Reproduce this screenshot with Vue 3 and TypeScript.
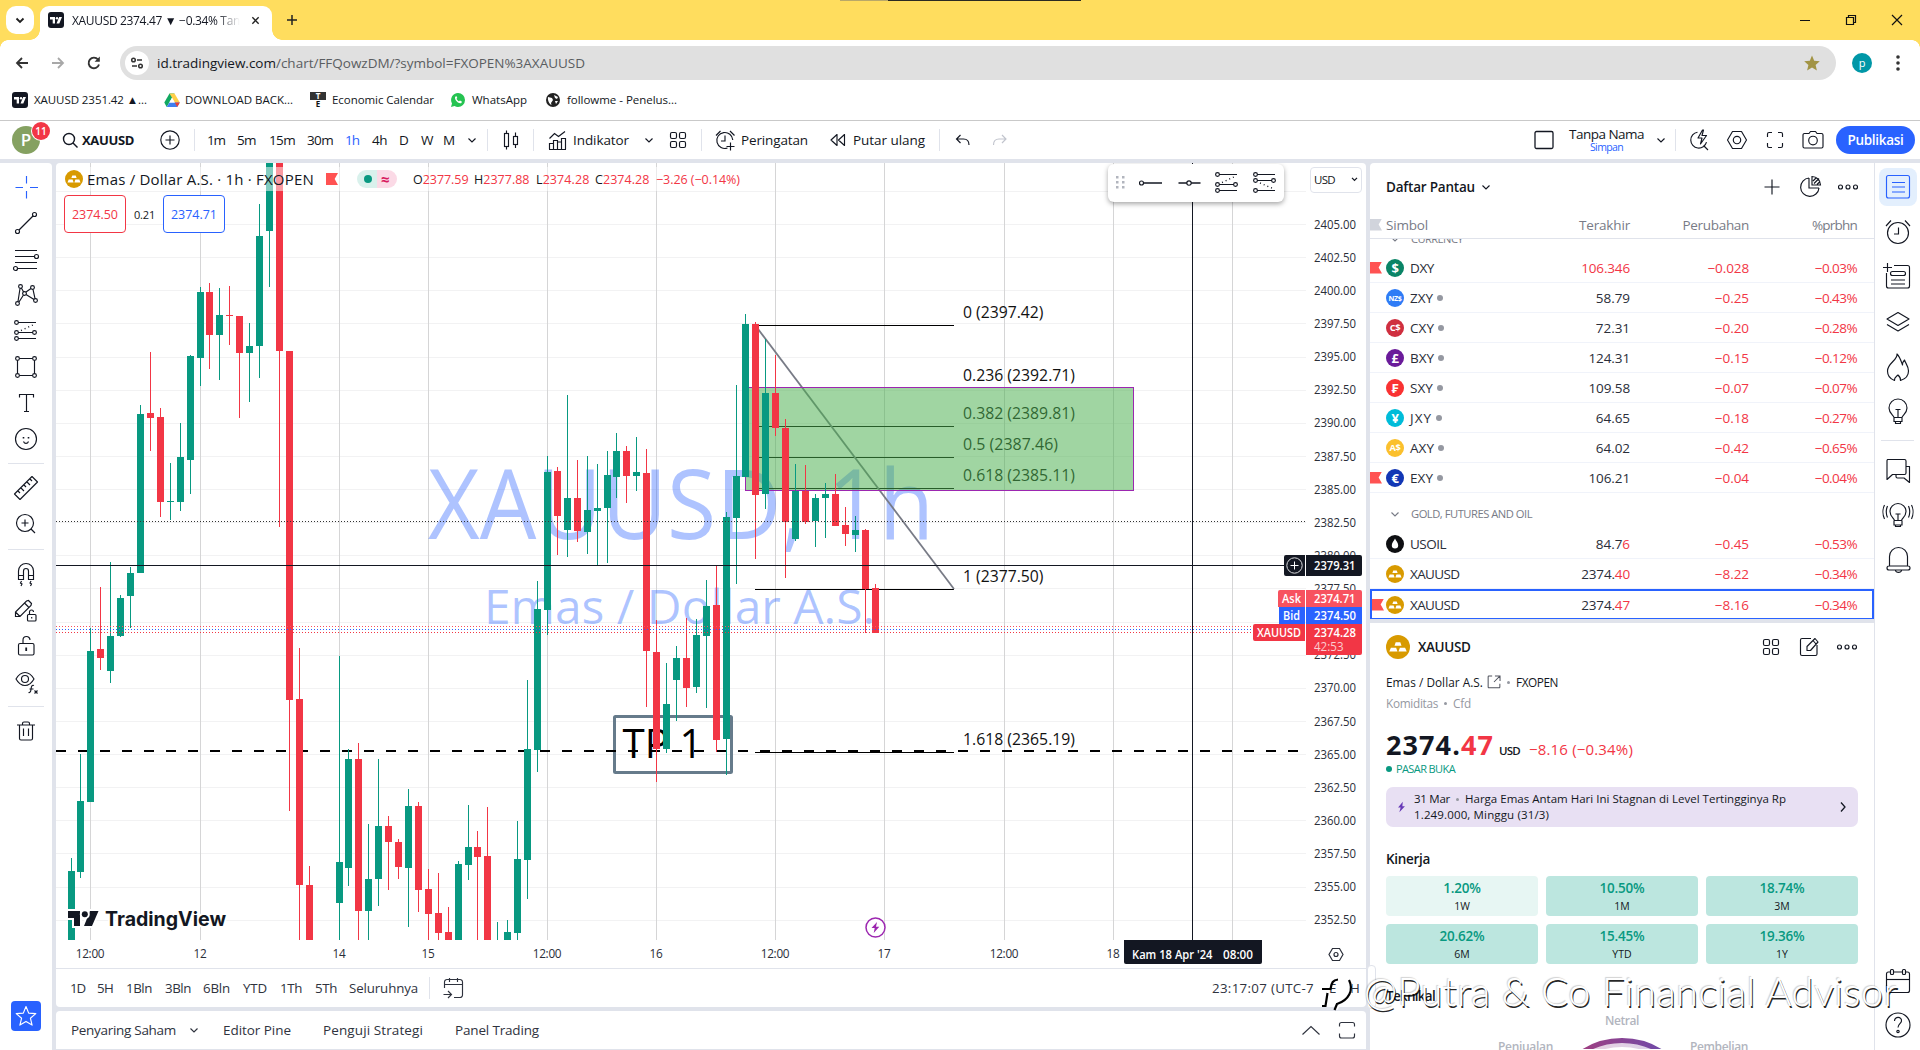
<script setup lang="ts">
type Candle = [number, number, number, number, number, 'g' | 'r']

/* Spaces the letters of an element so that its text takes the given width. */
const vFit = {
  mounted(el: HTMLElement, binding: { value: number }) {
    const range = document.createRange()
    range.selectNodeContents(el)
    const width = range.getBoundingClientRect().width
    const count = (el.textContent ?? '').length
    if (count > 0) el.style.letterSpacing = `${((binding.value - width) / count).toFixed(3)}px`
  },
}

const icons: Record<string, string> = {
  chevron: '<path d="M10.5 12.5l3.5 3.5 3.5-3.5"/>',
  up: '<path d="M5.5 18.5l8.5-8 8.5 8"/>',
  right: '<path d="M12 9.5l4 4.5-4 4.5" stroke-width="1.3"/>',
  search: '<circle cx="13" cy="13" r="5.5" stroke-width="1.4"/><path d="M17 17l4.5 4.5" stroke-width="1.4"/>',
  addc: '<circle cx="14" cy="14" r="9.2"/><path d="M14 9.5v9M9.5 14h9"/>',
  candles: '<path d="M9.5 4.5v3M9.5 20.5v3M18.5 6.500v4M18.5 18.500v3.500" /><rect x="7.500" y="7.500" width="4" height="13"/><rect x="16.500" y="10.500" width="4" height="8"/>',
  indicator: '<path d="M5.500 23v-5.500h4V23M9.500 23v-8.500h4V23M13.500 23v-7h4v7M17.500 23V12.500h4V23M5 23.500h17M5.500 12.500l5-5 4 3 6.500-5"/>',
  grid: '<rect x="6.500" y="6.500" width="6" height="6" rx="1.500"/><rect x="15.500" y="6.500" width="6" height="6" rx="1.500"/><rect x="6.500" y="15.500" width="6" height="6" rx="1.500"/><rect x="15.500" y="15.500" width="6" height="6" rx="1.500"/>',
  alarmadd: '<path d="M16.500 22a8 8 0 1 1 5.300-8M14 9.500V15h-4M5 9.500L9.500 5M23.500 9.500L19 5M19.500 16.500v8M15.500 20.500h8"/>',
  replay: '<path d="M13 8.500v11L7 14zM20.500 8.500v11l-6-5.500z" stroke-linejoin="round"/>',
  undo: '<path d="M11.500 9l-4 4 4 4M8 13h6.500c3.500 0 5.500 2 5.500 6"/>',
  redo: '<path d="M16 9l4 4-4 4M19.500 13H13c-3.500 0-5.500 2-5.500 6"/>',
  square: '<rect x="5" y="5.500" width="18" height="17" rx="1.500" stroke-width="1.300"/>',
  quick: '<path d="M12.500 6.200a8 8 0 1 0 9 10M18.500 19.500l4.500 4.500M17.500 4l-4.500 8h4l-1.500 6 6-8.500h-4.500l1.500-5.500z" stroke-linejoin="round"/>',
  hex: '<path d="M9.500 5.500h9l5 8.500-5 8.500h-9L4.500 14z" stroke-linejoin="round"/><circle cx="14" cy="14" r="3.700"/>',
  full: '<path d="M6.500 11V8A1.500 1.500 0 0 1 8 6.500h3M17 6.500h3A1.500 1.500 0 0 1 21.500 8v3M21.500 17v3a1.500 1.500 0 0 1-1.500 1.500h-3M11 21.500H8A1.500 1.500 0 0 1 6.500 20v-3"/>',
  maximize: '<path d="M6.500 10.500V8A2 2 0 0 1 8.500 6.500h11a2 2 0 0 1 2 2v2M21.500 17.500v2.500a2 2 0 0 1-2 2h-11a2 2 0 0 1-2-2v-2.500"/>',
  camera: '<path d="M10 7.500l1.500-2h5l1.500 2h4.500a1.500 1.500 0 0 1 1.500 1.500v11.500a1.500 1.500 0 0 1-1.500 1.500h-17A1.500 1.500 0 0 1 4 20.500V9a1.500 1.500 0 0 1 1.500-1.500z" stroke-linejoin="round"/><circle cx="14" cy="14.500" r="4.300"/>',
  cross: '<path d="M14.500 3v7.500M14.500 18v7.500M3.500 14.500H11M18 14.500h8"/>',
  trend: '<path d="M7 21L21 7"/><circle cx="5.500" cy="22.500" r="2"/><circle cx="22.500" cy="5.500" r="2"/>',
  fib: '<path d="M3 5.500h22M3 11.500h19.500M3 17.500h22M5.500 23.500H25"/><circle cx="24.500" cy="11.500" r="2"/><circle cx="3.500" cy="23.500" r="2"/>',
  xabcd: '<circle cx="5.500" cy="22.500" r="1.900"/><circle cx="8.500" cy="5.500" r="1.900"/><circle cx="12.500" cy="12.500" r="1.900"/><circle cx="20.500" cy="6.500" r="1.900"/><circle cx="23.500" cy="19.500" r="1.900"/><path d="M6 20.500L8 7.500M9.300 7l2.400 4M14 11l5-3.500M21 8.300l2 9.300M14 13.500l8 5M7 21l4.500-7"/>',
  forecast: '<path d="M6 5.500h18M6 15.500h15M6 21.500h18"/><circle cx="4.500" cy="5.500" r="1.900"/><circle cx="4.500" cy="15.500" r="1.900"/><circle cx="4.500" cy="21.500" r="1.900"/><circle cx="22.500" cy="15.500" r="1.900"/><path d="M9 13.500L23 7" stroke-dasharray="1 3" stroke-width="1.400"/>',
  forecast2: '<path d="M6 5.500h18M6 11.500h15M6 21.500h18"/><circle cx="4.500" cy="5.500" r="1.900"/><circle cx="4.500" cy="11.500" r="1.900"/><circle cx="4.500" cy="21.500" r="1.900"/><circle cx="22.500" cy="11.500" r="1.900"/><path d="M9 14L23 20" stroke-dasharray="1 3" stroke-width="1.400"/>',
  rect: '<path d="M7.500 5.500h13M7.500 22.500h13M5.500 7.500v13M22.500 7.500v13"/><circle cx="5.500" cy="5.500" r="1.900"/><circle cx="22.500" cy="5.500" r="1.900"/><circle cx="5.500" cy="22.500" r="1.900"/><circle cx="22.500" cy="22.500" r="1.900"/>',
  text: '<path d="M7.500 8.500v-3h14v3M14.500 5.500v17M12 22.500h5"/>',
  smile: '<circle cx="14" cy="14" r="10.500"/><path d="M11.500 16.500c1 2.500 4 2.500 5 0"/><path d="M11.500 12v1.500M16.500 12v1.500" stroke-width="1.600"/>',
  ruler: '<path d="M2.500 20L20 2.500l5.500 5.500L8 25.500zM6 17l2 2M9 14l3 3M12 11l2 2M15 8l3 3M18 5l2 2" stroke-linejoin="round"/>',
  zoom: '<circle cx="13" cy="13" r="8.500"/><path d="M19 19l4 4M13 9.500v7M9.500 13h7"/>',
  magnet: '<path d="M6.500 18.500V10a7.500 7.500 0 0 1 15 0v8.500h-5V10a2.500 2.500 0 0 0-5 0v8.500zM6.500 14.500h5M16.500 14.500h5M9.500 20l-1 2 1.500 1-1 2M19 20l-1 2 1.500 1-1 2"/>',
  pencil: '<path d="M3.500 19.500v-4.500L14.500 4l2-.5 3 3-.5 2L8 19.500zM12.500 6l4 4M3.500 15l4.500 4.500"/><rect x="15.500" y="17.500" width="8.500" height="6.500" rx="1"/><path d="M17.500 17.500v-2.500a2 2 0 0 1 4 0M19.700 20v1.500"/>',
  lock: '<rect x="6.500" y="10.500" width="15.500" height="11.500" rx="1.500"/><path d="M11 10.500V7a3.500 3.500 0 0 1 7 0"/><path d="M14.200 14.500v3.500" stroke-width="1.800"/>',
  eye: '<path d="M4 10c5-8.700 13-8.700 18 0-5 8.700-13 8.700-18 0z"/><circle cx="13" cy="10" r="3.500"/><path d="M22 16.500c-2-.8-2.600.5-2.900 3-.3 3-.8 4.500-2.600 4M17.500 20h4M22.500 21.500l3 3M25.500 21.500l-3 3"/>',
  trash: '<path d="M5 7h18M7.500 7V20.500A1.500 1.500 0 0 0 9 22h10a1.500 1.500 0 0 0 1.500-1.500V7M10.500 7V5.500A1.500 1.500 0 0 1 12 4h4A1.500 1.500 0 0 1 17.500 5.500v1.500M11.500 10.500v7.500M16.500 10.500v7.500"/>',
  star: '<path d="M14 4.500l2.700 6.600 7.100.5-5.400 4.600 1.700 6.900-6.100-3.700-6.100 3.700 1.700-6.900-5.400-4.600 7.100-.5z" stroke-linejoin="round"/>',
  plus: '<path d="M14 6.500v15M6.500 14h15"/>',
  pie: '<path d="M13 5a9.200 9.200 0 1 0 10 10M13 5v10h10M16 3.500v8.500h8.500a8.500 8.500 0 0 0-8.500-8.500zM17 8l3.500-3.500M18 10.500l5-5M21 11.500l3-3"/>',
  dots: '<circle cx="6.500" cy="14" r="2"/><circle cx="14" cy="14" r="2"/><circle cx="21.500" cy="14" r="2"/>',
  edit: '<path d="M16 5.500H7A1.500 1.500 0 0 0 5.500 7v14A1.500 1.500 0 0 0 7 22.500h13.500a1.500 1.500 0 0 0 1.500-1.500v-9M12 17.500v-4l8-8 3 3.500-7.500 8.500zM18 7.500l3 3.500" stroke-linejoin="round"/>',
  list: '<rect x="2.500" y="2.500" width="23" height="22.500" rx="2"/><path d="M8 9.500h13M8 14h13M8 19h13"/>',
  alarm: '<circle cx="14" cy="15" r="10.500"/><path d="M14.500 9.500V16H10M2 8l5-5.500M26 8l-5-5.500"/>',
  notes: '<path d="M10 2.500h13.500a2 2 0 0 1 2 2V23a2 2 0 0 1-2 2H4.500a2 2 0 0 1-2-2V10M3.500 0v9M-1 4.500h9M7 17h14M7 21h14"/><rect x="6.500" y="8.500" width="15" height="4" rx="2"/>',
  layers: '<path d="M14 4.500L25 11l-11 6.500L3 11zM3 16.500L14 23l11-6.500" stroke-linejoin="round"/>',
  fire: '<path d="M13 1c1 6-9.500 9-9.500 17 0 4.500 3 8 7 9.500-.5-3 1.500-3.500 3.500-5.500 1.500 1.500 3 3 2.500 5.500 5-1.500 8-5 8-9.500 0-5-3-7.500-4-11-1.500 1.500-2 3-2 5C17 8 16 4 13 1z" stroke-linejoin="round"/>',
  bulb: '<path d="M10 19.500c-.3-2-5-4-5-9.500a9 9 0 0 1 18 0c0 5.500-4.700 7.500-5 9.500zM10 19.500v4h8v-4M11.500 23.500v2h5v-2M11.500 11.500h5M14 11.500v8"/>',
  chat: '<path d="M3.500 3.500h17a1.500 1.500 0 0 1 1.500 1.500v12a1.500 1.500 0 0 1-1.500 1.500H8.500L3 23.500V4.500zM22 10.500h3.500v16l-5.500-4.500h-6.500A1.500 1.500 0 0 1 12 20.500v-2" stroke-linejoin="round"/>',
  stream: '<path d="M10.500 19.500c-.3-2-4.500-4-4.500-9a8 8 0 0 1 16 0c0 5-4.200 7-4.500 9zM10 19.500v4.500h8v-4.500M11.500 24v1.500h5V24M11.500 13h5M14 13v6.500M3.500 5c-1.500 3.500-1.500 8 0 11.500M.5 4c-2 4-2 10 0 14M24.500 5c1.500 3.500 1.500 8 0 11.500M27.500 4c2 4 2 10 0 14"/>',
  bell: '<path d="M5.500 20.500v-10a9 9 0 0 1 18 0v10M5 20h19a1.500 1.500 0 0 1 0 4H5a1.500 1.500 0 0 1 0-4zM11.500 24.500c.5 2.500 5.500 2.500 6 0"/>',
  calendar: '<rect x="2.500" y="6" width="23" height="20.500" rx="2"/><path d="M2.500 13.500h23"/><rect x="6.500" y="3.500" width="3" height="5" rx="1" fill="#fff"/><rect x="18.500" y="3.500" width="3" height="5" rx="1" fill="#fff"/>',
  help: '<circle cx="14" cy="14" r="12"/><path d="M10.500 10c0-5 7.500-4.500 7 0-.3 2.500-3.500 3-3.500 6.500"/><circle cx="14" cy="20.500" r="1.200"/>',
  goto: '<path d="M5.500 14V8A2.500 2.500 0 0 1 8 5.500h13A2.500 2.500 0 0 1 23.500 8v13a2.500 2.500 0 0 1-2.500 2.500h-6M5.500 10.500h18M10.500 4v4M18.500 4v4M4.500 20.500h7.500M9 17l3.500 3.500L9 24"/>',
  external: '<path d="M12 7.500H8.500a.8.800 0 0 0-.8.800v11.200a.8.800 0 0 0 .8.800h11a.8.800 0 0 0 .8-.8V16M15 7.500h5.500V13M20.500 7.500L14 14"/>',
  hray: '<path d="M5.500 14h19.500" stroke-width="1.500"/><circle cx="4.500" cy="14" r="2" fill="#fff"/>',
  hline: '<path d="M3.500 14h22" stroke-width="1.500"/><circle cx="14" cy="14" r="2.200" fill="#fff"/>',
}

const goldSvg = '<circle cx="12" cy="12" r="12" fill="#d89a00"/><path d="M9.700 7.200h4.600l1.200 3.600h-7zM4.900 12.700h5.200l1.400 3.800H3.300zM13.900 12.700h5.200l1.600 3.800h-8.200z" fill="#fff"/>'

const frames: [string, number, boolean?][] = [
  ['1m', 18], ['5m', 19], ['15m', 26], ['30m', 26], ['1h', 14, true], ['4h', 15], ['D', 8.5], ['W', 11], ['M', 10.5],
]
const tools = ['cross', 'trend', 'fib', 'xabcd', 'forecast', 'rect', 'text', 'smile', '-', 'ruler', 'zoom', '-', 'magnet', 'pencil', 'lock', 'eye', '-', 'trash']
const sideTools = ['list', 'alarm', 'notes', 'layers', 'fire', 'bulb', '-', 'chat', 'stream', 'bell']

/* x, high, body top, body bottom, low, colour */
const candles: Candle[] = [
  [71, 858, 871, 940, 940, 'g'], [80, 754, 801, 872, 878, 'g'], [90, 628, 651, 802, 802, 'g'], [100, 587, 649, 658, 670, 'r'],
  [110, 562, 636, 671, 683, 'g'], [120, 595, 598, 636, 637, 'g'], [130, 567, 573, 596, 628, 'g'], [140, 405, 414, 573, 573, 'g'],
  [150, 352, 413, 418, 451, 'r'], [160, 408, 417, 502, 517, 'r'], [170, 463, 501, 502, 520, 'g'], [180, 423, 457, 502, 511, 'g'],
  [190, 355, 356, 460, 494, 'g'], [200, 287, 292, 358, 386, 'g'], [209, 283, 292, 335, 369, 'r'], [219, 288, 315, 335, 380, 'g'],
  [229, 286, 315, 316, 345, 'r'], [239, 316, 316, 353, 418, 'r'], [249, 323, 346, 353, 402, 'g'], [259, 204, 236, 346, 378, 'g'],
  [269, 163, 163, 231, 287, 'g'], [279, 163, 163, 351, 527, 'r'], [289, 351, 351, 700, 811, 'r'], [299, 648, 699, 885, 940, 'r'],
  [309, 866, 885, 940, 940, 'r'], [339, 656, 862, 903, 940, 'g'], [348, 749, 759, 868, 886, 'g'], [358, 743, 759, 911, 940, 'r'],
  [368, 824, 879, 911, 940, 'g'], [378, 759, 826, 879, 906, 'g'], [388, 816, 826, 842, 890, 'r'], [398, 839, 842, 867, 879, 'r'],
  [408, 789, 806, 868, 927, 'g'], [418, 802, 806, 890, 912, 'r'], [428, 869, 889, 914, 940, 'r'], [438, 873, 913, 933, 940, 'r'],
  [448, 907, 932, 940, 940, 'r'], [458, 861, 864, 940, 940, 'g'], [468, 805, 847, 865, 880, 'g'], [477, 831, 847, 857, 940, 'r'],
  [487, 807, 856, 940, 940, 'r'], [497, 922, 940, 940, 940, 'g'], [507, 920, 932, 940, 940, 'g'], [517, 821, 859, 933, 940, 'g'],
  [527, 680, 749, 860, 899, 'g'], [537, 581, 609, 750, 772, 'g'], [547, 456, 472, 610, 635, 'g'], [557, 467, 471, 516, 555, 'r'],
  [567, 395, 498, 530, 557, 'g'], [577, 460, 498, 531, 542, 'r'], [587, 456, 510, 532, 554, 'g'], [597, 464, 508, 511, 565, 'g'],
  [607, 451, 475, 508, 563, 'g'], [616, 433, 451, 477, 498, 'g'], [626, 446, 451, 476, 503, 'r'], [636, 437, 472, 476, 491, 'g'],
  [646, 449, 473, 651, 707, 'r'], [656, 620, 652, 749, 782, 'r'], [666, 663, 704, 749, 753, 'g'], [676, 646, 658, 680, 721, 'g'],
  [686, 618, 658, 688, 707, 'r'], [696, 619, 635, 687, 693, 'g'], [706, 580, 606, 636, 708, 'g'], [716, 566, 605, 740, 752, 'r'],
  [726, 512, 517, 739, 775, 'g'], [736, 385, 476, 518, 584, 'g'], [745, 314, 324, 477, 477, 'g'], [755, 322, 324, 495, 559, 'r'],
  [765, 339, 393, 494, 509, 'g'], [775, 355, 393, 428, 436, 'r'], [785, 419, 428, 522, 578, 'r'], [795, 464, 491, 539, 541, 'g'],
  [805, 465, 491, 522, 524, 'r'], [815, 494, 498, 521, 547, 'g'], [825, 483, 494, 498, 538, 'g'], [835, 474, 494, 526, 526, 'r'],
  [845, 507, 525, 534, 546, 'r'], [855, 516, 530, 535, 552, 'g'], [865, 529, 530, 589, 633, 'r'], [875, 584, 588, 633, 633, 'r'],
]

const priceY = (p: number) => 224.6 + (2405 - p) * 13.25
const prices = Array.from({ length: 22 }, (_, i) => 2405 - i * 2.5)
const gridY = [2407.5, ...prices].map((p) => Math.floor(priceY(p)))
const times: [number, string][] = [
  [90, '12:00'], [200, '12'], [339, '14'], [428, '15'], [547, '12:00'], [656, '16'], [775, '12:00'], [884, '17'], [1004, '12:00'], [1113, '18'], [1232, ''],
]
const fibLines = [325, 426, 457, 488, 589, 752]
const fibLabels: [number, string, number][] = [
  [317.5, '0 (2397.42)', 80.5], [380.5, '0.236 (2392.71)', 112], [418.5, '0.382 (2389.81)', 112], [449.5, '0.5 (2387.46)', 95], [480.5, '0.618 (2385.11)', 112], [581.5, '1 (2377.50)', 80.5], [744.5, '1.618 (2365.19)', 112],
]

interface Row { sym: string; w: number; logo: string; bg: string; last: string; tail?: string; chg: string; pct: string; red?: boolean; dot?: boolean; flag?: boolean; sel?: boolean }
const currencies: Row[] = [
  { sym: 'DXY', w: 24, logo: '$', bg: '#0a8466', last: '106.346', chg: '−0.028', pct: '−0.03%', red: true, flag: true },
  { sym: 'ZXY', w: 23, logo: 'NZ$', bg: '#2f7cf6', last: '58.79', chg: '−0.25', pct: '−0.43%', dot: true },
  { sym: 'CXY', w: 24, logo: 'C$', bg: '#cf2f3f', last: '72.31', chg: '−0.20', pct: '−0.28%', dot: true },
  { sym: 'BXY', w: 24, logo: '£', bg: '#6a1b9a', last: '124.31', chg: '−0.15', pct: '−0.12%', dot: true },
  { sym: 'SXY', w: 23, logo: '₣', bg: '#f93232', last: '109.58', chg: '−0.07', pct: '−0.07%', dot: true },
  { sym: 'JXY', w: 22, logo: '¥', bg: '#00bcd9', last: '64.65', chg: '−0.18', pct: '−0.27%', dot: true },
  { sym: 'AXY', w: 24, logo: 'A$', bg: '#fbc02d', last: '64.02', chg: '−0.42', pct: '−0.65%', dot: true },
  { sym: 'EXY', w: 23, logo: '€', bg: '#1237b5', last: '106.21', chg: '−0.04', pct: '−0.04%', dot: true, flag: true },
]
const metals: Row[] = [
  { sym: 'USOIL', w: 36, logo: 'oil', bg: '#111', last: '84.7', tail: '6', chg: '−0.45', pct: '−0.53%' },
  { sym: 'XAUUSD', w: 49.5, logo: 'gold', bg: '', last: '2374.', tail: '40', chg: '−8.22', pct: '−0.34%' },
  { sym: 'XAUUSD', w: 49.5, logo: 'gold', bg: '', last: '2374.', tail: '47', chg: '−8.16', pct: '−0.34%', flag: true, sel: true },
]
const groups = [
  { name: 'CURRENCY', w: 52, rows: currencies },
  { name: 'GOLD, FUTURES AND OIL', w: 121, rows: metals },
]
/* Advance widths of the numeric columns at the list's text size. */
const numW = (s: string) => [...s].reduce((n, c) => n + (c === '.' ? 5 : c === '%' ? 8 : 7.3), 0)
const coinText = (s: string) => [{ y: 13.5, size: 13 }, { y: 12.3, size: 9.3 }, { y: 11.6, size: 7.2 }][s.length - 1]

const perf: [string, string][] = [['1.20%', '1W'], ['10.50%', '1M'], ['18.74%', '3M'], ['20.62%', '6M'], ['15.45%', 'YTD'], ['19.36%', '1Y']]
const ranges: [string, number][] = [['1D', 15], ['5H', 16], ['1Bln', 26], ['3Bln', 26], ['6Bln', 27], ['YTD', 24], ['1Th', 22], ['5Th', 22], ['Seluruhnya', 69]]
const ohlc: [string, string, number][] = [['O', '2377.59', 55.5], ['H', '2377.88', 55.5], ['L', '2374.28', 53.5], ['C', '2374.28', 54.5]]
</script>

<template>
  <div class="screen">
    <header class="tabs">
      <span class="streak"></span>
      <div class="tabmenu"><svg viewBox="0 0 10 10" width="10" height="10"><path d="M1.5 3.5L5 7l3.500-3.500" fill="none" stroke="#1f1f1f" stroke-width="1.800" /></svg></div>
      <div class="tab">
        <svg class="tvfav" viewBox="0 0 16 16"><rect width="16" height="16" rx="3" fill="#131722" /><path d="M2 5h5v6.500H4.700V7.500H2zM11.200 5H14l-2.700 6.500H8.500z" fill="#fff" /><circle cx="9" cy="6.200" r="1.200" fill="#fff" /></svg>
        <span class="tabtitle"><span v-fit="168" class="nw">XAUUSD 2374.47 ▼ −0.34% Tan</span></span>
        <svg class="tabx" viewBox="0 0 10 10"><path d="M1.500 1.500l7 7M8.500 1.500l-7 7" stroke="#222" stroke-width="1.500" /></svg>
      </div>
      <svg class="newtab" viewBox="0 0 12 12"><path d="M6 1v10M1 6h10" stroke="#222" stroke-width="1.500" /></svg>
      <div class="winctl">
        <svg viewBox="0 0 12 12"><path d="M1 6.500h10" stroke="#111" /></svg>
        <svg viewBox="0 0 12 12"><path d="M1.500 3.500h7v7h-7zM3.500 3.500v-2h7v7h-2" stroke="#111" fill="none" stroke-width="1.200" /></svg>
        <svg viewBox="0 0 12 12"><path d="M1 1l10 10M11 1L1 11" stroke="#111" stroke-width="1.200" /></svg>
      </div>
    </header>

    <div class="nav">
      <svg class="n16" viewBox="0 0 16 16"><path d="M14 8H3M8 3L3 8l5 5" fill="none" stroke="#333" stroke-width="1.800" /></svg>
      <svg class="n16" viewBox="0 0 16 16"><path d="M2 8h11M8 3l5 5-5 5" fill="none" stroke="#a8a8a8" stroke-width="1.800" /></svg>
      <svg class="n16" viewBox="0 0 16 16"><path d="M13 9.500a5.300 5.300 0 1 1-1-5" fill="none" stroke="#333" stroke-width="1.900" /><path d="M13.800 1.500v5.200H8.600z" fill="#333" /></svg>
      <div class="omni">
        <span class="tune"><svg viewBox="0 0 14 14" width="14" height="14"><g fill="none" stroke="#333" stroke-width="1.500"><circle cx="3.500" cy="4" r="1.800" /><path d="M7 4h5M2 10h5" /><circle cx="10.500" cy="10" r="1.800" /></g></svg></span>
        <span v-fit="428" class="url nw">id.tradingview.com<i>/chart/FFQowzDM/?symbol=FXOPEN%3AXAUUSD</i></span>
        <svg class="fav" viewBox="0 0 16 16"><path d="M8 .500l2.200 5.200 5.600.5-4.200 3.700 1.300 5.500L8 12.500l-4.900 2.900 1.300-5.500L.2 6.200l5.600-.5z" fill="#a29444" /></svg>
      </div>
      <span class="prof">p</span>
      <svg class="kebab" viewBox="0 0 4 16"><circle cx="2" cy="2" r="1.800" /><circle cx="2" cy="8" r="1.800" /><circle cx="2" cy="14" r="1.800" /></svg>
    </div>

    <div class="marks">
      <svg class="tvfav" viewBox="0 0 16 16"><rect width="16" height="16" rx="3" fill="#131722" /><path d="M2 5h5v6.500H4.700V7.500H2zM11.200 5H14l-2.700 6.500H8.500z" fill="#fff" /><circle cx="9" cy="6.200" r="1.200" fill="#fff" /></svg>
      <span><b v-fit="113">XAUUSD 2351.42 ▲...</b></span>
      <svg class="n16" viewBox="0 0 16 16"><path d="M5.500 1.500h5L5.300 10.600 2.700 15 .3 10.500z" fill="#11a861" /><path d="M5.500 1.500h5l5.300 9h-5z" fill="#ffcf48" /><path d="M5.400 10.500h10.400L13.200 15H2.700z" fill="#3f7ff0" /><path d="M15.800 10.500L13.200 15l-2.400-4.500z" fill="#e94235" /><path d="M8 5.800l2.700 4.700H5.300z" fill="#fff" /></svg>
      <span><b v-fit="108">DOWNLOAD BACK...</b></span>
      <span class="te"><u>T</u><em>E</em></span>
      <span><b v-fit="102">Economic Calendar</b></span>
      <svg class="n16" viewBox="0 0 16 16"><path d="M8 1a7 7 0 0 1 0 14c-1.300 0-2.400-.3-3.400-.9L1 15l1-3.500A7 7 0 0 1 8 1z" fill="#25c351" /><path d="M5.500 4.500c-2 2 2.500 8 6 6.500l.3-1.500-1.800-1-1 .8C8 9 7 8 6.500 6.800l.8-.9-.7-1.600z" fill="#fff" /></svg>
      <span><b v-fit="55">WhatsApp</b></span>
      <svg class="n16" viewBox="0 0 16 16"><circle cx="8" cy="8" r="7" fill="#222" /><path d="M3 5l4 1 1 2-2 3 .5 2C4 12 2.500 8 3 5zM9 3l4 2-1 2-2-1zM10 9l3 0-2 3z" fill="#fff" /></svg>
      <span><b v-fit="110">followme - Penelus...</b></span>
    </div>

    <div class="topbar">
      <span class="me">P<i>11</i></span>
      <svg class="ic" viewBox="0 0 28 28" v-html="icons.search"></svg>
      <b v-fit="52" class="nw tk">XAUUSD</b>
      <svg class="ic" viewBox="0 0 28 28" v-html="icons.addc"></svg>
      <span class="sep"></span>
      <span v-for="f in frames" :key="f[0]" v-fit="f[1]" class="nw" :class="{ on: f[2] }">{{ f[0] }}</span>
      <svg class="ic" viewBox="0 0 28 28" v-html="icons.chevron"></svg>
      <span class="sep"></span>
      <svg class="ic" viewBox="0 0 28 28" v-html="icons.candles"></svg>
      <span class="sep"></span>
      <svg class="ic" viewBox="0 0 28 28" v-html="icons.indicator"></svg>
      <span v-fit="56" class="nw">Indikator</span>
      <svg class="ic" viewBox="0 0 28 28" v-html="icons.chevron"></svg>
      <svg class="ic" viewBox="0 0 28 28" v-html="icons.grid"></svg>
      <span class="sep"></span>
      <svg class="ic" viewBox="0 0 28 28" v-html="icons.alarmadd"></svg>
      <span v-fit="67" class="nw">Peringatan</span>
      <svg class="ic" viewBox="0 0 28 28" v-html="icons.replay"></svg>
      <span v-fit="72" class="nw">Putar ulang</span>
      <span class="sep"></span>
      <svg class="ic" viewBox="0 0 28 28" v-html="icons.undo"></svg>
      <svg class="ic faint" viewBox="0 0 28 28" v-html="icons.redo"></svg>
      <svg class="ic" viewBox="0 0 28 28" v-html="icons.square"></svg>
      <span class="layout"><span v-fit="75" class="nw">Tanpa Nama</span><i v-fit="33" class="nw">Simpan</i></span>
      <svg class="ic" viewBox="0 0 28 28" v-html="icons.chevron"></svg>
      <span class="sep"></span>
      <svg class="ic" viewBox="0 0 28 28" v-html="icons.quick"></svg>
      <svg class="ic" viewBox="0 0 28 28" v-html="icons.hex"></svg>
      <svg class="ic" viewBox="0 0 28 28" v-html="icons.full"></svg>
      <svg class="ic" viewBox="0 0 28 28" v-html="icons.camera"></svg>
      <span class="publish"><span v-fit="56" class="nw">Publikasi</span></span>
    </div>

    <div class="work">
      <aside class="tools">
        <template v-for="(t, i) in tools" :key="i">
          <hr v-if="t === '-'" />
          <svg v-else class="ic" :class="{ blue: t === 'cross' }" viewBox="0 0 28 28" v-html="icons[t]"></svg>
        </template>
        <span class="starbtn"><svg class="ic" viewBox="0 0 28 28" v-html="icons.star"></svg></span>
      </aside>

      <main class="center">
        <section class="chart">
          <svg class="plot" viewBox="56 163 1310 805" width="1310" height="805">
            <g shape-rendering="crispEdges">
              <rect v-for="y in gridY" :key="'h' + y" x="56" :y="y" width="1250" height="1" fill="#f2f2f3" />
              <rect v-for="t in times" :key="'v' + t[0]" :x="t[0]" y="163" width="1" height="777" fill="#d5d5d6" />
            </g>
            <g fill="#2962ff" fill-opacity=".38" font-weight="500">
              <text x="428" y="539" font-size="97" textLength="506" lengthAdjust="spacingAndGlyphs">XAUUSD, 1h</text>
              <text x="484" y="624" font-size="48" textLength="391" lengthAdjust="spacingAndGlyphs">Emas / Dollar A.S.</text>
            </g>
            <rect v-for="y in fibLines" :key="'f' + y" x="755" :y="y" width="199" height="1" fill="#000" />
            <path d="M755 325L954 589" stroke="#787b86" stroke-width="1.800" />
            <text v-for="f in fibLabels" :key="f[1]" x="963" :y="f[0]" :textLength="f[2]" font-size="15.500" fill="#111" lengthAdjust="spacingAndGlyphs">{{ f[1] }}</text>
            <rect x="745.500" y="387.500" width="388" height="103" fill="#4caf50" fill-opacity=".53" stroke="#9c27b0" />
            <rect x="614.500" y="716.500" width="117" height="56" rx="1" fill="none" stroke="#667b8b" stroke-width="3" />
            <text x="622.500" y="758" font-size="40" textLength="80" fill="#000" lengthAdjust="spacingAndGlyphs">TP 1</text>
            <path d="M56 751H1306" stroke="#000" stroke-width="2" stroke-dasharray="10 12" />
            <g shape-rendering="crispEdges">
              <template v-for="c in candles" :key="c[0]">
                <rect :x="c[0]" :y="c[1]" width="1" :height="c[4] - c[1]" :fill="c[5] === 'g' ? '#089981' : '#f23645'" />
                <rect :x="c[0] - 3" :y="c[2]" width="7" :height="c[3] - c[2]" :fill="c[5] === 'g' ? '#089981' : '#f23645'" />
              </template>
              <path d="M56 521.500H1306" stroke="#333" stroke-dasharray="1 2" />
              <path d="M56 626.500H1278" stroke="#f7525f" stroke-dasharray="1 2" />
              <path d="M56 629.500H1279" stroke="#2962ff" stroke-dasharray="1 2" />
              <path d="M56 632.500H1253" stroke="#f23645" stroke-dasharray="1 2" />
              <path d="M56 565.500H1284M1192.500 163V940" stroke="#131722" />
            </g>
            <circle cx="875.500" cy="927.500" r="9.500" fill="#fff" stroke="#9c27b0" stroke-width="1.500" />
            <path d="M877 922l-5.500 6h3.200l-1 5 5.600-6.300h-3.300z" fill="#9c27b0" />

            <g class="logo">
              <path d="M68 911h12v15h-6v-8h-6zM90 911h8.500l-6.500 15h-8z" /><circle cx="84.800" cy="914.200" r="3" />
              <text x="105" y="926" textLength="121" lengthAdjust="spacingAndGlyphs">TradingView</text>
            </g>

            <g font-size="11.800" fill="#2a2e39">
              <text v-for="p in prices" :key="p" x="1314" :y="priceY(p) + 4.100" textLength="42" lengthAdjust="spacingAndGlyphs">{{ p.toFixed(2) }}</text>
              <text v-for="t in times" :key="'t' + t[0]" :x="t[0]" y="958.200" text-anchor="middle" letter-spacing="-.3">{{ t[1] }}</text>
            </g>

            <g font-size="12" font-weight="600" fill="#fff">
              <path d="M1286 555h19v21h-19a2 2 0 0 1-2-2v-17a2 2 0 0 1 2-2zM1306 555h54a2 2 0 0 1 2 2v17a2 2 0 0 1-2 2h-54z" fill="#131722" />
              <circle cx="1294.500" cy="565.500" r="7.700" fill="none" stroke="#d8d9dc" /><path d="M1294.500 561.500v8M1290.500 565.500h8" stroke="#fff" />
              <text x="1314" y="570" textLength="41.500" lengthAdjust="spacingAndGlyphs">2379.31</text>
              <path d="M1280 590h25v17h-27v-15a2 2 0 0 1 2-2zM1306 590h54a2 2 0 0 1 2 2v15h-56z" fill="#f7525f" />
              <text x="1282" y="603" textLength="19" lengthAdjust="spacingAndGlyphs">Ask</text>
              <text x="1314" y="603" textLength="41.500" lengthAdjust="spacingAndGlyphs">2374.71</text>
              <path d="M1279 607h26v17h-26zM1306 607h56v17h-56z" fill="#2962ff" />
              <text x="1283" y="620" textLength="17" lengthAdjust="spacingAndGlyphs">Bid</text>
              <text x="1314" y="620" textLength="42" lengthAdjust="spacingAndGlyphs">2374.50</text>
              <path d="M1255 624h50v17h-50a2 2 0 0 1-2-2v-13a2 2 0 0 1 2-2zM1306 624h56v29a2 2 0 0 1-2 2h-54z" fill="#f23645" />
              <text x="1257" y="637" textLength="44" lengthAdjust="spacingAndGlyphs">XAUUSD</text>
              <text x="1314" y="637" textLength="42" lengthAdjust="spacingAndGlyphs">2374.28</text>
              <text x="1314" y="651" textLength="29.500" lengthAdjust="spacingAndGlyphs" fill-opacity=".75" font-weight="500">42:53</text>
              <path d="M1124 940h138v22a2 2 0 0 1-2 2h-134a2 2 0 0 1-2-2z" fill="#131722" />
              <text x="1132" y="959" textLength="80.500" lengthAdjust="spacingAndGlyphs">Kam 18 Apr '24</text>
              <text x="1223" y="959" textLength="30" lengthAdjust="spacingAndGlyphs">08:00</text>
            </g>
            <g fill="none" stroke="#2a2e39" stroke-width="1.200"><path d="M1332.500 948.500h7l3.500 6-3.500 6h-7l-3.500-6z" /><circle cx="1336" cy="954.500" r="2" /></g>
          </svg>

          <div class="legend">
            <svg class="coin" viewBox="0 0 24 24" v-html="goldSvg"></svg>
            <span v-fit="227" class="nw name">Emas / Dollar A.S. · 1h · FXOPEN</span>
            <span class="flag"></span>
            <span class="pill"><i></i><b>≈</b></span>
            <span v-for="o in ohlc" :key="o[0]" v-fit="o[2]" class="nw">{{ o[0] }}<em>{{ o[1] }}</em></span>
            <span v-fit="84" class="nw"><em>−3.26 (−0.14%)</em></span>
          </div>
          <div class="quotes">
            <span class="sell"><span v-fit="46" class="nw">2374.50</span></span><small>0.21</small><span class="buy"><span v-fit="46" class="nw">2374.71</span></span>
          </div>
          <div class="float">
            <svg class="drag" viewBox="0 0 10 14"><g fill="#b2b5be"><rect width="2.500" height="2.500" /><rect x="6" width="2.500" height="2.500" /><rect y="5" width="2.500" height="2.500" /><rect x="6" y="5" width="2.500" height="2.500" /><rect y="10" width="2.500" height="2.500" /><rect x="6" y="10" width="2.500" height="2.500" /></g></svg>
            <svg class="ic" viewBox="0 0 28 28" v-html="icons.hray"></svg>
            <svg class="ic" viewBox="0 0 28 28" v-html="icons.hline"></svg>
            <svg class="ic" viewBox="0 0 28 28" v-html="icons.forecast"></svg>
            <svg class="ic" viewBox="0 0 28 28" v-html="icons.forecast2"></svg>
          </div>
          <div class="ccy"><span v-fit="21" class="nw">USD</span><svg viewBox="0 0 8 6" width="7" height="5"><path d="M1 1l3 3 3-3" fill="none" stroke="#131722" stroke-width="1.500" /></svg></div>
        </section>

        <div class="ranges">
          <span v-for="r in ranges" :key="r[0]" v-fit="r[1]" class="nw">{{ r[0] }}</span>
          <span class="sep"></span>
          <svg class="ic" viewBox="0 0 28 28" v-html="icons.goto"></svg>
          <span v-fit="102" class="nw">23:17:07 (UTC-7</span>
          <span class="nw">E</span>
          <span class="nw">H</span>
        </div>

        <div class="bottom">
          <span v-fit="105" class="nw">Penyaring Saham</span>
          <svg class="ic" viewBox="0 0 28 28" v-html="icons.chevron"></svg>
          <span v-fit="68" class="nw">Editor Pine</span>
          <span v-fit="100" class="nw">Penguji Strategi</span>
          <span v-fit="84" class="nw">Panel Trading</span>
          <svg class="ic" viewBox="0 0 28 28" v-html="icons.up"></svg>
          <svg class="ic" viewBox="0 0 28 28" v-html="icons.maximize"></svg>
        </div>
      </main>

      <section class="panel">
        <div class="watch">
          <div class="whead">
            <b v-fit="89" class="nw">Daftar Pantau</b>
            <svg class="ic" viewBox="0 0 28 28" v-html="icons.chevron"></svg>
            <svg class="ic" viewBox="0 0 28 28" v-html="icons.plus"></svg>
            <svg class="ic" viewBox="0 0 28 28" v-html="icons.pie"></svg>
            <svg class="ic" viewBox="0 0 28 28" v-html="icons.dots"></svg>
          </div>
          <div class="cols">
            <span class="flag grey"></span>
            <span class="sy"><span v-fit="42" class="nw">Simbol</span></span>
            <span><span v-fit="51" class="nw">Terakhir</span></span>
            <span><span v-fit="66.5" class="nw">Perubahan</span></span>
            <span><span v-fit="45" class="nw">%prbhn</span></span>
          </div>
          <div class="rows">
            <template v-for="g in groups" :key="g.name">
              <div class="group"><svg class="ic" viewBox="0 0 28 28" v-html="icons.chevron"></svg><span v-fit="g.w" class="nw">{{ g.name }}</span></div>
              <div v-for="(r, i) in g.rows" :key="i" class="row" :class="{ sel: r.sel }">
                <span class="flag" :class="{ off: !r.flag }"></span>
                <svg v-if="r.logo === 'gold'" class="coin" viewBox="0 0 24 24" v-html="goldSvg"></svg>
                <svg v-else-if="r.logo === 'oil'" class="coin" viewBox="0 0 18 18"><circle cx="9" cy="9" r="9" fill="#0e0f12" /><path d="M9 3.500c1 2.500 3.200 4 3.200 6.800a3.200 3.200 0 0 1-6.400 0C5.800 7.500 8 6 9 3.500z" fill="#fff" /></svg>
                <svg v-else class="coin" viewBox="0 0 18 18"><circle cx="9" cy="9" r="9" :fill="r.bg" /><text x="9" :y="coinText(r.logo).y" :font-size="coinText(r.logo).size" text-anchor="middle" letter-spacing="-.3" font-weight="700" fill="#fff">{{ r.logo }}</text></svg>
                <span class="sym"><span v-fit="r.w" class="nw">{{ r.sym }}</span><i v-if="r.dot"></i></span>
                <span class="num" :class="{ red: r.red }"><span v-fit="numW(r.last + (r.tail ?? ''))" class="nw">{{ r.last }}<em>{{ r.tail }}</em></span></span>
                <span class="num red"><span v-fit="numW(r.chg)" class="nw">{{ r.chg }}</span></span>
                <span class="num red"><span v-fit="numW(r.pct)" class="nw">{{ r.pct }}</span></span>
              </div>
            </template>
          </div>
        </div>

        <div class="detail">
          <div class="dhead">
            <svg class="coin lg" viewBox="0 0 24 24" v-html="goldSvg"></svg>
            <b v-fit="52.5" class="nw">XAUUSD</b>
            <svg class="ic" viewBox="0 0 28 28" v-html="icons.grid"></svg>
            <svg class="ic" viewBox="0 0 28 28" v-html="icons.edit"></svg>
            <svg class="ic" viewBox="0 0 28 28" v-html="icons.dots"></svg>
          </div>
          <div class="dname"><span v-fit="97" class="nw">Emas / Dollar A.S.</span><svg class="ic ext" viewBox="0 0 28 28" v-html="icons.external"></svg><span class="bul"></span><span v-fit="42" class="nw">FXOPEN</span></div>
          <div class="dkind"><span v-fit="52" class="nw">Komiditas</span><span class="bul"></span><span v-fit="18" class="nw">Cfd</span></div>
          <div class="dprice"><strong v-fit="108" class="nw">2374.<em>47</em></strong><b v-fit="21" class="nw">USD</b><span v-fit="104" class="nw">−8.16 (−0.34%)</span></div>
          <div class="dopen"><i></i><span v-fit="59" class="nw">PASAR BUKA</span></div>
          <div class="news">
            <svg viewBox="0 0 10 14" width="9" height="12"><path d="M6.500 1L1 7.500h3L2.500 13 9 6H6z" fill="#673ab7" /></svg>
            <p><span class="nl"><span v-fit="36" class="nw">31 Mar</span><span class="bul"></span><span v-fit="321" class="nw">Harga Emas Antam Hari Ini Stagnan di Level Tertingginya Rp</span></span><span v-fit="135" class="nw">1.249.000, Minggu (31/3)</span></p>
            <svg class="ic" viewBox="0 0 28 28" v-html="icons.right"></svg>
          </div>
          <h4><span v-fit="44" class="nw">Kinerja</span></h4>
          <div class="perf"><div v-for="p in perf" :key="p[1]"><b>{{ p[0] }}</b><span>{{ p[1] }}</span></div></div>
          <h4 class="tek"><span v-fit="49" class="nw">Teknikal</span></h4>
          <div class="neutral"><span v-fit="34" class="nw">Netral</span></div>
          <div class="gauge">
            <span v-fit="55" class="nw">Penjualan</span>
            <svg viewBox="0 0 90 12" width="90" height="12">
              <defs><linearGradient id="gg" x1="0" x2="1"><stop offset="0" stop-color="#b03a72" /><stop offset="1" stop-color="#5f4fb8" /></linearGradient></defs>
              <circle cx="45" cy="76" r="69" fill="none" stroke="url(#gg)" stroke-opacity=".25" stroke-width="6" />
              <circle cx="45" cy="76" r="72.500" fill="none" stroke="url(#gg)" stroke-width="5" />
            </svg>
            <span v-fit="58" class="nw">Pembelian</span>
          </div>
        </div>
      </section>

      <aside class="side">
        <template v-for="(t, i) in sideTools" :key="i">
          <hr v-if="t === '-'" />
          <span v-else :class="{ act: t === 'list' }"><svg class="ic" viewBox="0 0 28 28" v-html="icons[t]"></svg></span>
        </template>
        <div class="low">
          <span><svg class="ic" viewBox="0 0 28 28" v-html="icons.calendar"></svg></span>
          <span><svg class="ic" viewBox="0 0 28 28" v-html="icons.help"></svg></span>
        </div>
      </aside>
    </div>

    <div class="handle"></div>
    <div class="credit">
      <svg viewBox="0 0 44 44" width="44" height="44">
        <g fill="none" stroke="#fff" stroke-width="4"><path d="M22 9c-6 1-7 5-8 10l-5 1M14 24l-4 13M30 9c11 7 6 20-6 26l-2 5" /></g>
        <g fill="none" stroke="#000" stroke-width="2.200"><path d="M24 10.500c-5 .5-6.500 3-7.500 9.500H8M13.500 24l-2 13H8M35 11c5 10 0 20-12 24l-2.500 6" /></g>
      </svg>
      <span v-fit="534" class="nw">@Putra &amp; Co Financial Advisor</span>
    </div>
  </div>
</template>

<style>
html, body { margin: 0; overflow: hidden; }
</style>

<style scoped>
* { box-sizing: border-box; }
.screen { position: relative; width: 1920px; height: 1050px; display: flex; flex-direction: column; overflow: hidden; background: #fff; color: #131722; font: 13.500px "Open Sans", "Noto Sans", sans-serif; }
.nw { white-space: nowrap; }
i, em, u { font-style: normal; text-decoration: none; }
.ic { width: 28px; height: 28px; fill: none; stroke: currentColor; stroke-width: 1.150; flex: none; overflow: visible; display: block; }
.red, em { color: #f23645; }

.tabs { height: 40px; flex: none; background: #ffdd5e; display: flex; position: relative; }
.streak { position: absolute; left: 840px; top: 0; width: 241px; height: 1px; background: linear-gradient(90deg, #b9a868 0 20%, #2b2a22 20%); }
.tabmenu { width: 28px; height: 28px; margin: 6px 6px 0; border-radius: 10px; background: #fff; display: flex; align-items: center; justify-content: center; }
.tab { width: 232px; height: 34px; margin-top: 6px; border-radius: 9px 9px 0 0; background: #fff; display: flex; align-items: center; padding: 0 0 6px 8px; position: relative; }
.tab::before, .tab::after { content: ""; position: absolute; bottom: 0; width: 10px; height: 10px; }
.tab::before { left: -10px; background: radial-gradient(circle at 0 0, transparent 9.500px, #fff 10px); }
.tab::after { right: -10px; background: radial-gradient(circle at 100% 0, transparent 9.500px, #fff 10px); }
.tvfav { width: 16px; height: 16px; flex: none; display: block; }
.tabtitle { width: 168px; margin-left: 8px; overflow: hidden; font-size: 12px; -webkit-mask-image: linear-gradient(90deg, #000 86%, transparent); mask-image: linear-gradient(90deg, #000 86%, transparent); }
.tabx { width: 9px; height: 9px; margin-left: 11px; }
.newtab { width: 12px; height: 12px; margin: 14px 0 0 14px; }
.winctl { margin-left: auto; display: flex; gap: 34px; padding: 14px 17px 0 0; }
.winctl svg { width: 12px; height: 12px; }

.nav { height: 46px; flex: none; display: flex; align-items: center; padding-left: 14px; background: #fff; position: relative; }
.nav::before, .nav::after { content: ""; position: absolute; top: 0; width: 8px; height: 8px; }
.nav::before { left: 0; background: radial-gradient(circle at 100% 100%, transparent 7.500px, #ffdd5e 8px); }
.nav::after { right: 0; background: radial-gradient(circle at 0 100%, transparent 7.500px, #ffdd5e 8px); }
.n16 { width: 16px; height: 16px; flex: none; display: block; }
.nav .n16 { margin-right: 20px; }
.omni { width: 1716px; height: 34px; margin-left: -2px; border-radius: 17px; background: #e0e0e0; display: flex; align-items: center; padding: 0 16px 0 5px; }
.tune { width: 24px; height: 24px; border-radius: 50%; background: #fff; display: flex; align-items: center; justify-content: center; margin-right: 8px; }
.url { font-size: 13.500px; }
.url i { color: #5a5d61; }
.fav { width: 16px; height: 16px; margin-left: auto; }
.prof { width: 20px; height: 20px; margin-left: 16px; border-radius: 50%; background: #0097a7; color: #fff; font-size: 11px; line-height: 19px; text-align: center; }
.kebab { width: 4px; height: 16px; margin-left: 24px; fill: #333; }
.marks { height: 35px; flex: none; display: grid; grid-template-columns: 22px 130px 21px 125px 22px 118px 22px 73px 22px 140px; align-items: center; padding: 0 0 7px 12px; font-size: 11.500px; border-bottom: 1px solid #c9c9c9; }
.marks b { font-weight: 400; white-space: nowrap; }
.te { display: flex; flex-direction: column; width: 16px; height: 16px; font-size: 8px; line-height: 8px; font-weight: 700; text-align: center; }
.te u { background: #333; color: #fff; width: 16px; height: 8px; }
.te em { color: #111; }

.topbar { height: 38px; flex: none; display: grid; align-items: center; padding-left: 12px; font-size: 13.500px;
  grid-template-columns: 44px 26px 74px 38px 13px 30px 32px 38px 38px 27px 27px 22px 22px 15px 29px 10px 36px 11px 29px 62px 29px 37px 10px 30px 83px 29px 86px 10px 37px 544px 39px 78px 28px 10px 38px 38px 38px 37px 80px; }
.tk { font-weight: 700; font-size: 13px; }
.sep { width: 1px; height: 22px; background: #e0e3eb; }
.on { color: #2962ff; }
.faint { color: #c1c4cd; }
.me { width: 28px; height: 28px; border-radius: 50%; background: #85a161; color: #fff; font-size: 17px; font-weight: 600; line-height: 28px; text-align: center; position: relative; }
.me i { position: absolute; left: 20px; top: -4px; width: 18px; height: 18px; border-radius: 50%; background: #f23645; font-size: 10px; line-height: 18px; box-shadow: 0 0 0 1px #fff; }
.layout { display: flex; flex-direction: column; align-items: center; width: 75px; line-height: 15px; padding-bottom: 1px; }
.layout i { color: #2962ff; font-size: 10.500px; line-height: 11px; }
.publish { width: 79px; height: 28px; border-radius: 14px; background: #2962ff; color: #fff; font-weight: 600; display: flex; align-items: center; justify-content: center; }

.work { flex: 1; min-height: 0; display: flex; background: #e0e3eb; padding-top: 4px; }
.tools { width: 52px; background: #fff; border-radius: 0 4px 0 0; display: flex; flex-direction: column; align-items: center; padding-top: 10px; }
.tools > .ic { margin-bottom: 8px; }
.tools > hr { width: 36px; height: 1px; border: 0; background: #e0e3eb; margin: 2px 0 10px; }
.tools > hr:nth-of-type(2) { margin: 3px 0 11px; }
.tools > hr:nth-of-type(3) { margin: 1px 0 11px; }
.blue { color: #2962ff; }
.starbtn { width: 30px; height: 30px; border-radius: 4px; background: #2962ff; color: #fff; display: flex; align-items: center; justify-content: center; margin: auto 0 19px; }
.center { width: 1310px; margin-left: 4px; display: flex; flex-direction: column; }
.chart { position: relative; width: 1310px; height: 805px; background: #fff; border-radius: 4px 4px 0 0; overflow: hidden; }
.plot { display: block; font-family: "Open Sans", "Noto Sans", sans-serif; }
.logo { fill: #131722; stroke: #fff; stroke-width: 4px; paint-order: stroke; }
.logo text { font: 700 20px "Inter", sans-serif; }
.legend { position: absolute; left: 6px; top: 4px; height: 24px; display: grid; grid-template-columns: 22px 239px 31px 56px 61px 62px 59px 61px 86px; align-items: center; padding-left: 3px; background: rgba(255, 255, 255, .5); font-size: 12.500px; }
.name { font-size: 15px; }
.coin { width: 18px; height: 18px; display: block; flex: none; }
.flag { width: 12px; height: 12px; background: #ff5252; clip-path: polygon(0 0, 100% 0, 72% 50%, 100% 100%, 0 100%); }
.flag.grey { background: #d1d4dc; }
.flag.off { visibility: hidden; }
.pill { width: 40px; height: 18px; border-radius: 9px; background: linear-gradient(90deg, #d9f1ec 50%, #fbdae6 50%); display: flex; align-items: center; padding-left: 7px; }
.pill i { width: 8px; height: 8px; border-radius: 50%; background: #089981; }
.pill b { color: #d81b60; font-size: 15px; line-height: 16px; margin-left: 9px; }
.quotes { position: absolute; left: 8px; top: 32px; display: flex; align-items: center; }
.sell, .buy { width: 62px; height: 38px; border: 1px solid #f23645; border-radius: 4px; background: #fff; color: #f23645; display: flex; align-items: center; justify-content: center; font-size: 12.500px; }
.buy { border-color: #2962ff; color: #2962ff; }
.quotes small { width: 37px; text-align: center; font-size: 11px; letter-spacing: -.2px; }
.float { position: absolute; left: 1052px; top: 1px; width: 176px; height: 38px; border-radius: 6px; background: #fff; box-shadow: 0 2px 5px rgba(0, 0, 0, .35); display: flex; align-items: center; padding-left: 8px; gap: 10px; }
.drag { width: 10px; height: 14px; margin-right: 1px; }
.ccy { position: absolute; left: 1254px; top: 4px; width: 52px; height: 26px; border: 1px solid #e0e3eb; border-radius: 4px; background: #fff; display: flex; align-items: center; justify-content: space-between; padding: 0 3px 2px; font-size: 11.500px; }

.ranges { height: 39px; flex: none; border-top: 1px solid #e0e3eb; background: #fff; border-radius: 0 0 4px 4px; display: grid; align-items: center; padding-left: 14px; font-size: 13.300px; color: #2f333e;
  grid-template-columns: 27px 29px 39px 38px 40px 37px 35px 34px 80px 10px 773px 117px 21px 20px; }
.bottom { height: 39px; flex: none; margin-top: 4px; background: #fff; border-bottom: 1px solid #e0e3eb; border-radius: 4px 4px 0 0; display: grid; align-items: center; padding-left: 15px; font-size: 13.500px; color: #2f333e;
  grid-template-columns: 109px 43px 100px 132px 842px 36px 30px; }

.panel { width: 504px; margin-left: 4px; display: flex; flex-direction: column; }
.watch { height: 456px; background: #fff; border-radius: 4px 0 0 0; overflow: hidden; }
.whead { height: 48px; display: grid; grid-template-columns: 86px 286px 38px 38px 28px; align-items: center; padding-left: 16px; font-size: 13.500px; }
.whead b { font-weight: 600; }
.cols { height: 28px; display: grid; grid-template-columns: 16px 143px 101px 119px 108px; align-items: center; border-bottom: 1px solid #e0e3eb; color: #787b86; font-size: 13.500px; text-align: right; }
.cols .sy { text-align: left; }
.rows { height: 380px; overflow: hidden; }
.group { height: 36px; display: flex; align-items: center; padding: 5px 0 0 11px; color: #787b86; font-size: 11.200px; gap: 2px; }
.group:first-child { margin-top: -20px; height: 34px; }
.row { height: 30px; display: grid; grid-template-columns: 16px 24px 121px 99px 119px 108px; align-items: center; border-bottom: 1px solid #f0f3fa; color: #2a2e39; }
.sel { height: 31px; border: 2px solid #2962ff; grid-template-columns: 14px 24px 121px 99px 119px 108px; }
.sym { display: flex; align-items: center; gap: 4px; }
.sym i { width: 6px; height: 6px; border-radius: 50%; background: #9598a1; }
.num { text-align: right; }
.num.red { color: #f23645; }

.detail { flex: 1; min-height: 0; margin-top: 4px; background: #fff; padding-left: 16px; display: flex; flex-direction: column; overflow: hidden; }
.dhead { height: 48px; flex: none; display: grid; grid-template-columns: 32px 339px 38px 38px 28px; align-items: center; }
.dhead b { font-weight: 600; font-size: 13.500px; }
.coin.lg { width: 24px; height: 24px; }
.bul { display: inline-block; width: 3px; height: 3px; border-radius: 50%; background: #9598a1; margin: 0 6px; }
.dname { height: 22px; flex: none; display: flex; align-items: center; font-size: 11.800px; }
.ext { width: 26px; height: 26px; color: #50535e; margin: 0 -6px 0 -2px; }
.dname .ic { stroke-width: 1.100; }
.dkind { height: 20px; flex: none; display: flex; align-items: center; font-size: 11.800px; color: #9598a1; }
.dprice { height: 39px; margin-top: 8px; flex: none; display: flex; align-items: baseline; }
.dprice strong { font-size: 27px; font-weight: 700; line-height: 48px; width: 113px; }
.dprice b { font-size: 11.500px; font-weight: 600; width: 30px; }
.dprice > span { font-size: 15px; color: #f23645; }
.dopen { height: 16px; flex: none; display: flex; align-items: center; color: #089981; font-size: 11px; }
.dopen i { width: 6px; height: 6px; border-radius: 50%; background: #089981; margin-right: 4px; margin-top: 1px; }
.news { width: 472px; height: 40px; flex: none; margin-top: 11px; border-radius: 7px; background: #e8e0f3; display: flex; align-items: center; padding-left: 11px; font-size: 11.500px; line-height: 16px; }
.news p { margin: 0 0 0 8px; width: 415px; display: flex; flex-direction: column; align-items: flex-start; }
.nl { display: flex; align-items: center; }
h4 { margin: 22px 0 7px; height: 20px; flex: none; font-size: 13.500px; font-weight: 600; line-height: 20px; }
.perf { width: 472px; flex: none; display: grid; grid-template-columns: repeat(3, 152px); gap: 8px; }
.perf div { height: 40px; border-radius: 4px; background: #bce6df; display: flex; flex-direction: column; align-items: center; }
.perf div:first-child { background: #e7f6f3; }
.perf b { font-weight: 600; font-size: 13.500px; line-height: 22px; height: 22px; color: #089981; letter-spacing: -.2px; padding-top: 1px; }
.perf span { font-size: 10.500px; line-height: 16px; }
h4.tek { margin-bottom: 6px; }
.neutral { height: 18px; flex: none; width: 472px; text-align: center; line-height: 18px; color: #b2b5be; font-weight: 600; font-size: 12px; }
.gauge { width: 472px; flex: none; height: 20px; margin-top: 7px; display: grid; grid-template-columns: 79px 90px 20px 60px; padding-left: 112px; color: #b2b5be; font-weight: 600; font-size: 12px; line-height: 19px; }
.gauge svg { grid-column: 2; }
.gauge span:last-child { grid-column: 4; margin-left: 3px; }

.side { width: 46px; background: #fff; border-left: 1px solid #e0e3eb; display: flex; flex-direction: column; align-items: center; padding-top: 5px; }
.side span { width: 38px; height: 38px; border-radius: 8px; display: flex; align-items: center; justify-content: center; margin-bottom: 7px; flex: none; }
.side .act { background: #e3effd; color: #2962ff; }
.side hr { width: 33px; height: 1px; border: 0; background: #e0e3eb; margin: 2px 0 10px; flex: none; }
.side .low { margin-top: auto; margin-bottom: -1px; }

.handle { position: absolute; left: 1367px; top: 965px; width: 9px; height: 44px; border: 1px solid #e0e3eb; border-radius: 4px; background: #fff; }
.credit { position: absolute; left: 1314px; top: 969px; display: flex; align-items: center; height: 44px; }
.credit .nw { margin-left: 6px; color: #fff; font: 300 40px/44px "Lato", sans-serif; text-shadow: 1px 1.500px 0 rgba(0, 0, 0, .85), -1px -1px 1px rgba(0, 0, 0, .18); }
</style>
